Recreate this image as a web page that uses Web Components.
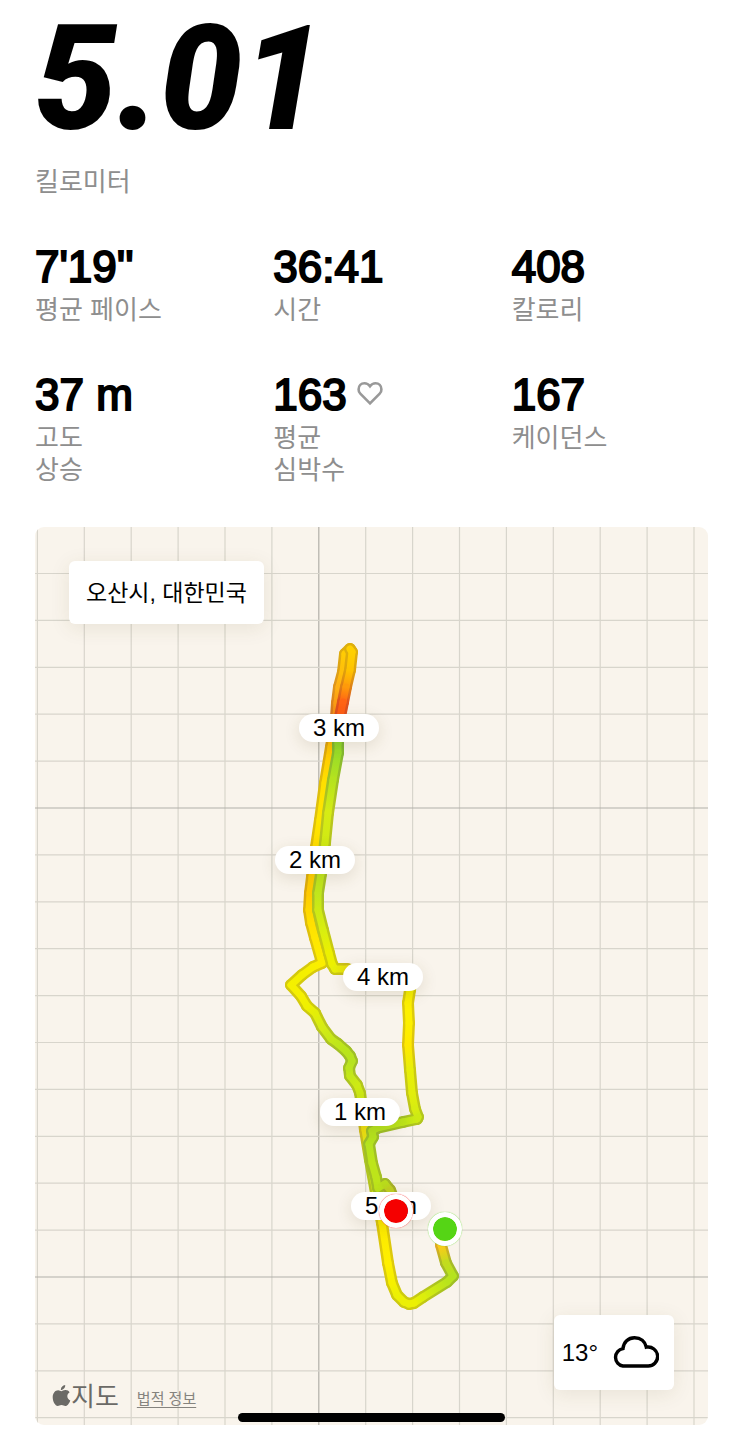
<!DOCTYPE html>
<html lang="ko">
<head>
<meta charset="utf-8">
<meta name="viewport" content="width=device-width, initial-scale=1">
<title>5.01 킬로미터</title>
<style>
    body {
        margin: 0;
        background: #fff;
        color: #000;
        font-family: "Liberation Sans", "Noto Sans CJK KR", sans-serif;
    }
</style>
</head>
<body>
<run-summary>
    <run-distance slot="distance" value="5.01">킬로미터</run-distance>

    <run-stat value="7'19''">평균 페이스</run-stat>
    <run-stat value="36:41">시간</run-stat>
    <run-stat value="408">칼로리</run-stat>
    <run-stat value="37 m">고도<br>상승</run-stat>
    <run-stat value="163"><heart-icon slot="icon"></heart-icon>평균<br>심박수</run-stat>
    <run-stat value="167">케이던스</run-stat>

    <route-map slot="map">
        <map-card slot="place">오산시, 대한민국</map-card>
        <map-pin x="304" y="201">3 km</map-pin>
        <map-pin x="280" y="333">2 km</map-pin>
        <map-pin x="348" y="450">4 km</map-pin>
        <map-pin x="325" y="585">1 km</map-pin>
        <map-pin x="356" y="679">5 km</map-pin>
        <map-dot x="410" y="702" color="#55d515"></map-dot>
        <map-dot x="361" y="684" color="#f50000"></map-dot>
        <map-card slot="weather" compact>13°<cloud-icon></cloud-icon></map-card>
    </route-map>
</run-summary>
<home-indicator></home-indicator>

<script>
// Size of the map drawing, pins and route use the same units
const MAP_W = 673;
const MAP_H = 898;

// Route points: x, y, pace colour
const OUTBOUND = [
    [408, 706, '#ffc81e'], [406, 718, '#ffca18'], [411, 736, '#c3dc1e'], [418, 749, '#b5e31e'],
    [412, 755, '#b9e41c'], [388, 770, '#dcee0c'], [379, 776, '#ecf004'], [374, 777, '#ecf004'],
    [369, 775, '#ecf004'], [362, 768, '#ecf004'], [357, 756, '#f5f000'], [353, 736, '#fff000'],
    [347, 696, '#fbe800'], [341, 666, '#d5ea14'], [335, 633, '#c5e81c'], [330, 603, '#f0e010'],
    [327, 580, '#d4ec14'], [325, 566, '#cdea14'], [322, 558, '#cdea14'], [315, 549, '#c4e818'],
    [314, 541, '#bce51c'], [317, 534, '#b7e31e'], [315, 529, '#b7e31e'], [311, 524, '#b9e41c'],
    [303, 517, '#bfe61a'], [296, 512, '#c6e818'], [287, 500, '#d5ec14'], [280, 486, '#e3ee08'],
    [272, 479, '#eff000'], [266, 469, '#f5f000'], [256, 458, '#f5f000'], [267, 448, '#f3ef00'],
    [278, 440, '#f8ef00'], [287, 436, '#fbee00'], [280, 411, '#ffe600'], [276, 396, '#ffe000'],
    [274, 383, '#ffd800'], [275, 366, '#ffca00'], [277, 350, '#ffd000'], [281, 320, '#ffdd00'],
    [285, 293, '#ffe600'], [290, 256, '#ffe000'], [296, 220, '#ffc400'], [301, 190, '#f48a18'],
    [302, 176, '#fa9c14'], [304, 160, '#ffb014'], [308, 145, '#ffbe0a'], [310, 127, '#ffcb04'],
    [315, 122, '#ffd000']
];
const RETURN = [
    [315, 122, '#ffd000'], [317, 125, '#ffd000'], [315, 143, '#ffc400'], [311, 160, '#ff9a0a'],
    [308, 175, '#ff6414'], [305, 190, '#ff5a14'], [304, 200, '#c0a020'], [303, 216, '#8ed62c'],
    [303, 226, '#98dc28'], [298, 253, '#b5e31e'], [293, 286, '#d6ec14'], [290, 316, '#d0ea14'],
    [286, 347, '#c0e61c'], [283, 366, '#c0e61c'], [283, 383, '#cdea14'], [288, 403, '#d8ee10'],
    [294, 426, '#ecf000'], [297, 437, '#ecf000'], [300, 442, '#e8ef08'], [312, 442, '#e8e010'],
    [340, 448, '#e8e010'], [376, 455, '#f3ee00'], [375, 463, '#f3ee00'], [373, 476, '#fdf000'],
    [374, 496, '#fdf000'], [373, 518, '#ffe900'], [375, 543, '#e8ef08'], [377, 566, '#e2ee0c'],
    [380, 582, '#d8ec10'], [383, 590, '#cdea14'], [382, 592, '#cdea14'], [368, 595, '#bde51a'],
    [342, 601, '#b5e31e'], [337, 604, '#b5e31e'], [338, 610, '#b5e31e'], [334, 617, '#b5e31e'],
    [337, 636, '#bde51a'], [341, 650, '#bde51a'], [343, 661, '#bde51a'], [350, 657, '#b9dc1c'],
    [355, 663, '#c0d020'], [361, 678, '#c0d020']
];

function darken(hex) {
    const n = parseInt(hex.slice(1), 16);
    const r = (n >> 16) * 0.87;
    const g = ((n >> 8) & 255) * 0.84;
    const b = (n & 255) * 0.9 + 12;
    return `rgb(${Math.round(r)}, ${Math.round(g)}, ${Math.round(b)})`;
}

// One pass over a leg: every segment gets a gradient between its two ends
function drawLeg(points, id, width, shade) {
    let defs = '';
    let lines = '';
    for (let i = 1; i < points.length; i++) {
        const [x1, y1, c1] = points[i - 1];
        const [x2, y2, c2] = points[i];
        defs += `<linearGradient id="${id}${i}" gradientUnits="userSpaceOnUse" x1="${x1}" y1="${y1}" x2="${x2}" y2="${y2}">
            <stop stop-color="${shade(c1)}"/><stop offset="1" stop-color="${shade(c2)}"/></linearGradient>`;
        lines += `<path d="M${x1} ${y1}L${x2} ${y2}" stroke="url(#${id}${i})"/>`;
    }
    return `<defs>${defs}</defs><g fill="none" stroke-linecap="round" stroke-width="${width}">${lines}</g>`;
}

function drawGrid() {
    const step = 46.9;
    let grid = '';
    for (let i = 0; i < 15; i++) {
        const x = 2.4 + i * step;
        grid += `<path d="M${x} 0V${MAP_H}" stroke="${i === 6 ? '#b2b0a9' : '#d8d5cc'}"/>`;
    }
    for (let i = 0; i < 19; i++) {
        const y = 46.5 + i * step;
        grid += `<path d="M0 ${y}H${MAP_W}" stroke="${i % 10 === 5 ? '#b2b0a9' : '#d8d5cc'}"/>`;
    }
    return `<g fill="none" stroke-width="1.2">${grid}</g>`;
}

class RunSummary extends HTMLElement {
    constructor() {
        super();
        this.attachShadow({ mode: 'open' });
        this.shadowRoot.innerHTML = `
            <style>
                :host { display: block; padding: 0 35px 11px; }
                .stats {
                    display: grid;
                    grid-template-columns: repeat(3, 1fr);
                    gap: 45px 42px;
                    margin: 45px 0 41px;
                }
            </style>
            <slot name="distance"></slot>
            <section class="stats"><slot></slot></section>
            <slot name="map"></slot>
        `;
    }
}

class RunDistance extends HTMLElement {
    constructor() {
        super();
        this.attachShadow({ mode: 'open' });
    }

    connectedCallback() {
        this.shadowRoot.innerHTML = `
            <style>
                :host { display: block; }
                h1 { margin: 0 0 6px; font: italic 900 146px/160px Roboto, sans-serif; }
                p { margin: 0; font-size: 26px; line-height: 32px; color: #8e8e8e; }
            </style>
            <h1>${this.getAttribute('value')}</h1>
            <p><slot></slot></p>
        `;
    }
}

class RunStat extends HTMLElement {
    constructor() {
        super();
        this.attachShadow({ mode: 'open' });
    }

    connectedCallback() {
        this.shadowRoot.innerHTML = `
            <style>
                :host { display: block; }
                /* regular weight with an outline, lighter than bold */
                .value {
                    display: flex;
                    align-items: center;
                    gap: 9px;
                    margin-bottom: 3px;
                    font-size: 44px;
                    line-height: 48px;
                    -webkit-text-stroke: 2px currentColor;
                }
                .label { font-size: 26px; line-height: 32px; color: #8e8e8e; }
            </style>
            <div class="value">${this.getAttribute('value')}<slot name="icon"></slot></div>
            <div class="label"><slot></slot></div>
        `;
    }
}

class HeartIcon extends HTMLElement {
    constructor() {
        super();
        this.attachShadow({ mode: 'open' });
        this.shadowRoot.innerHTML = `
            <style>
                :host { display: block; width: 28px; height: 30px; }
                svg { display: block; }
            </style>
            <svg width="28" height="28" viewBox="0 0 28 28" fill="none" stroke="#999" stroke-width="2.6">
                <path d="M14 23.4 4.3 13.7A6 6 0 0 1 2.6 9.2C2.6 5.7 5.2 3.2 8.4 3.2C10.8 3.2 12.6 4.2 14 6.2C15.4 4.2 17.2 3.2 19.6 3.2C22.8 3.2 25.4 5.7 25.4 9.2A6 6 0 0 1 23.7 13.7Z"/>
            </svg>
        `;
    }
}

class CloudIcon extends HTMLElement {
    constructor() {
        super();
        this.attachShadow({ mode: 'open' });
        this.shadowRoot.innerHTML = `
            <style>
                :host { display: block; width: 46px; height: 34px; }
                svg { display: block; }
            </style>
            <svg width="46" height="34" viewBox="0 0 46 34" fill="none" stroke="#000" stroke-width="3.4">
                <path d="M10 30A8.8 8.8 0 0 1 10 12.6C10.6 6.2 15.2 1.8 21.5 1.8C27.700 1.8 32.2 5.6 33.3 11.200A9.5 9.5 0 1 1 34.5 30Z"/>
            </svg>
        `;
    }
}

class MapCard extends HTMLElement {
    constructor() {
        super();
        this.attachShadow({ mode: 'open' });
        this.shadowRoot.innerHTML = `
            <style>
                :host {
                    display: flex;
                    align-items: center;
                    gap: 15px;
                    padding: 16px 17px 15px;
                    border-radius: 6px;
                    background: #fff;
                    box-shadow: 0 4px 20px rgba(90, 75, 30, 0.1);
                    font-size: 23px;
                    line-height: 32px;
                    white-space: nowrap;
                }
                :host([compact]) { padding: 21px 15px 20px 8px; font-size: 24px; line-height: 34px; }
            </style>
            <slot></slot>
        `;
    }
}

class MapPin extends HTMLElement {
    constructor() {
        super();
        this.attachShadow({ mode: 'open' });
    }

    connectedCallback() {
        this.style.left = `${this.getAttribute('x') / MAP_W * 100}%`;
        this.style.top = `${this.getAttribute('y') / MAP_H * 100}%`;
        this.shadowRoot.innerHTML = `
            <style>
                :host {
                    position: absolute;
                    transform: translate(-50%, -50%);
                    padding: 0 14px;
                    border-radius: 14px;
                    background: #fff;
                    box-shadow: 0 4px 16px rgba(90, 75, 30, 0.14);
                    font-size: 24px;
                    line-height: 28px;
                    white-space: nowrap;
                }
            </style>
            <slot></slot>
        `;
    }
}

class MapDot extends HTMLElement {
    constructor() {
        super();
        this.attachShadow({ mode: 'open' });
    }

    connectedCallback() {
        this.style.left = `${this.getAttribute('x') / MAP_W * 100}%`;
        this.style.top = `${this.getAttribute('y') / MAP_H * 100}%`;
        this.shadowRoot.innerHTML = `
            <style>
                :host {
                    position: absolute;
                    transform: translate(-50%, -50%);
                    width: 24px;
                    height: 24px;
                    border: 5px solid #fff;
                    border-radius: 50%;
                    background: ${this.getAttribute('color')};
                    background-clip: padding-box;
                    box-shadow: 0 0 1px ${this.getAttribute('color')};
                }
            </style>
        `;
    }
}

class RouteMap extends HTMLElement {
    constructor() {
        super();
        this.attachShadow({ mode: 'open' });
    }

    connectedCallback() {
        const same = (c) => c;
        this.shadowRoot.innerHTML = `
            <style>
                :host {
                    display: block;
                    position: relative;
                    overflow: hidden;
                    border-radius: 9px;
                    background: #f9f4ec;
                }
                .canvas { display: block; width: 100%; }
                .place { position: absolute; left: 34px; top: 34px; }
                .weather { position: absolute; right: 34px; bottom: 35px; }
                .credit {
                    position: absolute;
                    left: 17px;
                    bottom: 12px;
                    display: flex;
                    align-items: center;
                    gap: 18px;
                    color: #6b6a66;
                    line-height: 32px;
                }
                .brand { display: flex; align-items: center; font-size: 26px; }
                .credit a { padding-top: 4px; font-size: 15px; line-height: 28px; color: #85837e; text-underline-offset: 3px; }
            </style>
            <svg class="canvas" viewBox="0 0 ${MAP_W} ${MAP_H}" aria-hidden="true">
                ${drawGrid()}
                ${drawLeg(OUTBOUND, 'oe', 12, darken)}
                ${drawLeg(OUTBOUND, 'oc', 7, same)}
                ${drawLeg(RETURN, 're', 12, darken)}
                ${drawLeg(RETURN, 'rc', 7, same)}
            </svg>
            <slot></slot>
            <div class="place"><slot name="place"></slot></div>
            <div class="weather"><slot name="weather"></slot></div>
            <div class="credit">
                <span class="brand">
                    <svg width="19" height="26" viewBox="0 0 19 26" fill="currentColor" aria-hidden="true">
                        <path d="M13.2 1C13.4 3.6 11.3 6 8.9 6C8.6 3.5 10.8 1.2 13.2 1Z"/>
                        <path d="M9.3 7.2C10.2 7.2 11.6 6 13.6 6.1C15.3 6.2 16.7 6.9 17.6 8.2C14.3 10.3 14.7 14.9 18.3 16.4C17.4 18.9 15.5 22 13.4 22C11.9 22 11.3 21.1 9.5 21.1C7.7 21.1 7 22 5.7 22C3.3 22 .7 17.6 .7 13.3C.7 9 3.3 6.2 6.1 6.2C7.6 6.2 8.6 7.2 9.3 7.2Z"/>
                    </svg>지도
                </span>
                <a href="#legal">법적 정보</a>
            </div>
        `;
    }
}

class HomeIndicator extends HTMLElement {
    constructor() {
        super();
        this.attachShadow({ mode: 'open' });
        this.shadowRoot.innerHTML = `
            <style>
                :host {
                    position: fixed;
                    left: 32%;
                    right: 32%;
                    bottom: 14px;
                    height: 9px;
                    border-radius: 5px;
                    background: #000;
                }
            </style>
        `;
    }
}

customElements.define('run-summary', RunSummary);
customElements.define('run-distance', RunDistance);
customElements.define('run-stat', RunStat);
customElements.define('heart-icon', HeartIcon);
customElements.define('cloud-icon', CloudIcon);
customElements.define('map-card', MapCard);
customElements.define('map-pin', MapPin);
customElements.define('map-dot', MapDot);
customElements.define('route-map', RouteMap);
customElements.define('home-indicator', HomeIndicator);
</script>
</body>
</html>
